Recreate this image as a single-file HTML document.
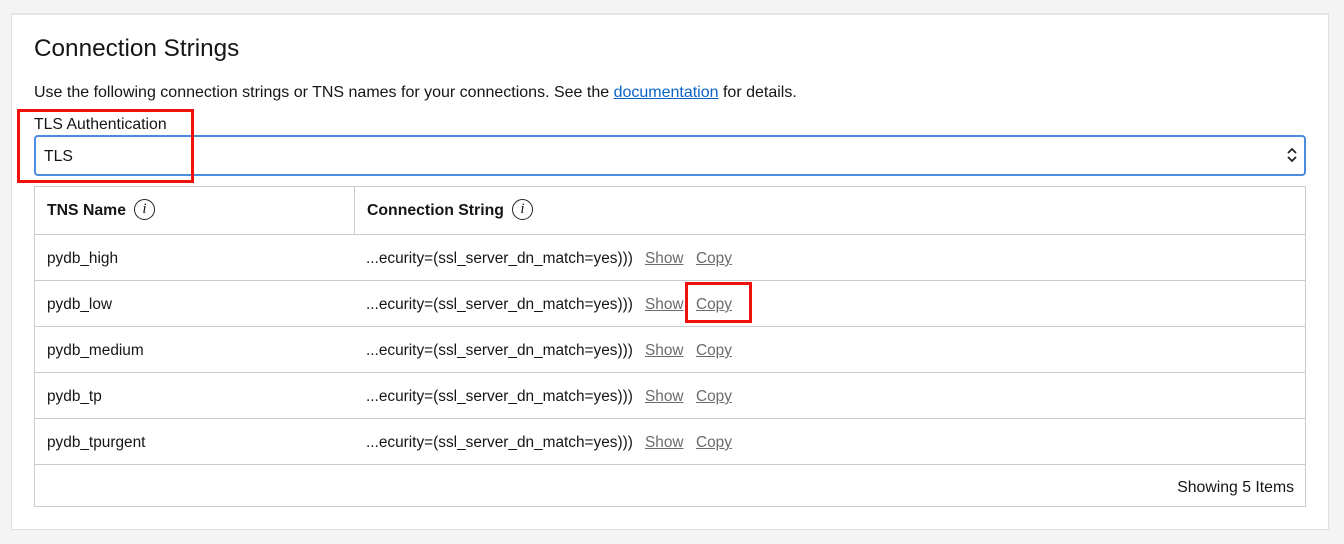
<!DOCTYPE html>
<html><head><style>
body{margin:0;background:#f4f4f4;font-family:"Liberation Sans",sans-serif;color:#161513;width:1344px;height:544px;overflow:hidden;position:relative}
.card{position:absolute;left:11px;top:13px;width:1318px;height:517px;background:#fff;border:1px solid #e0e0e0;box-sizing:border-box;border-top:2px solid #e4e4e4}
.abs{position:absolute;white-space:nowrap}
h1{position:absolute;left:34px;top:35px;margin:0;font-size:24.3px;font-weight:normal}
.t{font-size:15.4px}
.sel{position:absolute;left:34px;top:135px;width:1272px;height:41px;box-sizing:border-box;border:2px solid #4a8de0;border-radius:4px}
.tbl{position:absolute;left:34px;top:186px;width:1272px;height:321px;box-sizing:border-box;border:1px solid #c8ccd0}
.row{position:absolute;left:0;width:1270px;border-top:1px solid #c8ccd0}
.lnk{color:#6b6b6b;text-decoration:underline}
.info{display:inline-block;width:21px;height:21px;border:1.5px solid #222;border-radius:50%;text-align:center;font:italic 15px/18px "Liberation Serif",serif;vertical-align:middle;margin-left:8px;box-sizing:border-box;margin-top:-3px}
.red{position:absolute;border:3px solid #f0120a;box-sizing:border-box}
</style></head><body>
<div class="card"></div>
<h1>Connection Strings</h1>
<div class="abs" style="left:34px;top:84px;font-size:16px">Use the following connection strings or TNS names for your connections. See the <span style="color:#0a63c9;text-decoration:underline">documentation</span> for details.</div>
<div class="abs" style="left:34px;top:116px;font-size:15.8px">TLS Authentication</div>
<div class="sel"></div>
<div class="abs" style="left:44px;top:148px;font-size:15.8px">TLS</div>
<svg class="abs" style="left:1286px;top:146px" width="12" height="18" viewBox="0 0 12 18"><path d="M2 7l4-4 4 4M2 11l4 4 4-4" fill="none" stroke="#222" stroke-width="1.8"/></svg>
<div class="tbl">
<div style="position:absolute;left:319px;top:0;height:47px;border-left:1px solid #c8ccd0"></div>
<div class="row" style="top:47px"></div><div class="row" style="top:93px"></div><div class="row" style="top:139px"></div><div class="row" style="top:185px"></div><div class="row" style="top:231px"></div><div class="row" style="top:277px"></div>
</div>
<div class="abs" style="left:47px;top:202px;font-weight:bold;font-size:15.8px">TNS Name<span class="info">i</span></div>
<div class="abs" style="left:367px;top:202px;font-weight:bold;font-size:15.8px">Connection String<span class="info">i</span></div>
<div class="abs t" style="left:47px;top:250px">pydb_high</div>
<div class="abs t" style="left:47px;top:296px">pydb_low</div>
<div class="abs t" style="left:47px;top:342px">pydb_medium</div>
<div class="abs t" style="left:47px;top:388px">pydb_tp</div>
<div class="abs t" style="left:47px;top:434px">pydb_tpurgent</div>
<div class="abs t" style="left:366px;top:250px">...ecurity=(ssl_server_dn_match=yes)))</div><div class="abs t lnk" style="left:645px;top:250px">Show</div><div class="abs t lnk" style="left:696px;top:250px">Copy</div>
<div class="abs t" style="left:366px;top:296px">...ecurity=(ssl_server_dn_match=yes)))</div><div class="abs t lnk" style="left:645px;top:296px">Show</div><div class="abs t lnk" style="left:696px;top:296px">Copy</div>
<div class="abs t" style="left:366px;top:342px">...ecurity=(ssl_server_dn_match=yes)))</div><div class="abs t lnk" style="left:645px;top:342px">Show</div><div class="abs t lnk" style="left:696px;top:342px">Copy</div>
<div class="abs t" style="left:366px;top:388px">...ecurity=(ssl_server_dn_match=yes)))</div><div class="abs t lnk" style="left:645px;top:388px">Show</div><div class="abs t lnk" style="left:696px;top:388px">Copy</div>
<div class="abs t" style="left:366px;top:434px">...ecurity=(ssl_server_dn_match=yes)))</div><div class="abs t lnk" style="left:645px;top:434px">Show</div><div class="abs t lnk" style="left:696px;top:434px">Copy</div>
<div class="abs" style="right:50px;top:479px;font-size:15.8px">Showing 5 Items</div>
<div class="red" style="left:17px;top:109px;width:177px;height:74px"></div>
<div class="red" style="left:685px;top:282px;width:67px;height:41px"></div>
</body></html>
